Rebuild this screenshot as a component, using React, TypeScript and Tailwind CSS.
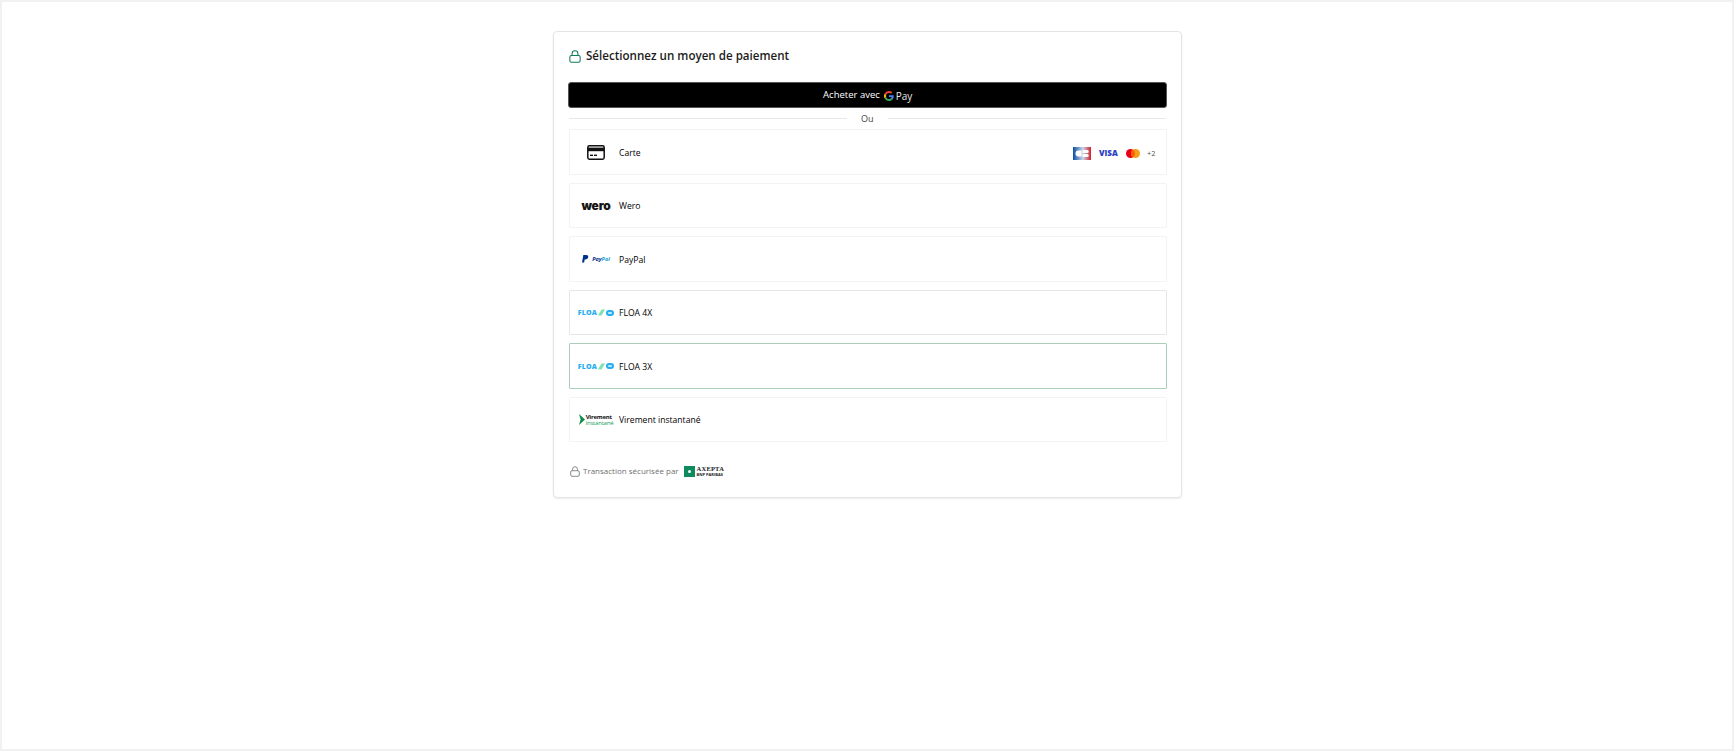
const font = "font-['Open_Sans','Noto_Sans',sans-serif]";

function LockIcon({ className }: { className: string }) {
  return (
    <svg viewBox="0 0 14 15" fill="none" stroke="currentColor" strokeWidth="1.2" className={className}>
      <rect x="1" y="6.4" width="12" height="7.8" rx="1.8" />
      <path d="M3.6 6.4V4.2a3.4 3.4 0 0 1 6.8 0v2.2" />
    </svg>
  );
}

function GoogleG() {
  return (
    <svg viewBox="0 0 48 48" className="h-[10px] w-[10px]">
      <path fill="#EA4335" d="M24 9.5c3.5 0 6.6 1.2 9.1 3.6l6.8-6.8C35.8 2.5 30.4 0 24 0 14.6 0 6.5 5.4 2.6 13.2l7.9 6.2C12.4 13.7 17.7 9.5 24 9.5z" />
      <path fill="#4285F4" d="M46.9 24.5c0-1.6-.1-3.1-.4-4.5H24v9h12.9c-.6 3-2.2 5.5-4.7 7.2l7.7 6c4.5-4.2 7-10.3 7-17.7z" />
      <path fill="#FBBC05" d="M10.5 28.6a14.5 14.5 0 0 1 0-9.2l-7.9-6.2a24 24 0 0 0 0 21.6l7.9-6.2z" />
      <path fill="#34A853" d="M24 48c6.5 0 11.9-2.1 15.9-5.8l-7.7-6c-2.2 1.5-4.9 2.3-8.2 2.3-6.3 0-11.6-4.2-13.5-9.9l-7.9 6.2C6.5 42.6 14.6 48 24 48z" />
    </svg>
  );
}

function CardIcon() {
  return (
    <svg viewBox="0 0 18 15" className="h-[15px] w-[18px]">
      <rect x="0.8" y="0.8" width="16.4" height="13.4" rx="1.6" fill="#fff" stroke="#111" strokeWidth="1.5" />
      <rect x="1" y="2.6" width="16" height="3.6" fill="#111" />
      <rect x="3" y="9.6" width="3" height="1.4" fill="#111" />
      <rect x="7" y="9.6" width="3" height="1.4" fill="#111" />
    </svg>
  );
}

function CbLogo() {
  return (
    <svg viewBox="0 0 18 13" className="h-[13px] w-[18px]">
      <defs>
        <linearGradient id="cb-bg" x1="0" x2="1" y1="0" y2="0">
          <stop offset="0" stopColor="#0b4ea2" />
          <stop offset="0.55" stopColor="#c9d6ea" />
          <stop offset="1" stopColor="#d3202b" />
        </linearGradient>
      </defs>
      <rect width="18" height="13" fill="url(#cb-bg)" />
      <path d="M8.6 3.6H5.4a2.9 2.9 0 0 0 0 5.8h3.2z" fill="#fff" />
      <path d="M9.6 3h4.6a1.5 1.5 0 0 1 0 3.1H9.6zM9.6 6.9h4.6a1.5 1.5 0 0 1 0 3.1H9.6z" fill="#fff" />
    </svg>
  );
}

function MastercardLogo() {
  return (
    <svg viewBox="0 0 14 9" className="h-[9px] w-[14px]">
      <circle cx="4.5" cy="4.5" r="4.5" fill="#eb001b" />
      <circle cx="9.5" cy="4.5" r="4.5" fill="#f79e1b" />
      <path d="M7 .8a4.5 4.5 0 0 1 0 7.4A4.5 4.5 0 0 1 7 .8z" fill="#ff5f00" />
    </svg>
  );
}

function FloaLogo() {
  return (
    <span className="flex items-center">
      <span className="text-[7px] leading-none font-extrabold tracking-[0.2px] text-[#27aef0]">FLOA</span>
      <svg viewBox="0 0 7 7" className="ml-[1px] h-[7px] w-[7px]">
        <path d="M0 6.5 3.5 .5h3.5L3.5 6.5z" fill="#7fe0b0" />
      </svg>
      <span className="ml-[1px] flex h-[6px] w-[8px] items-center justify-center rounded-full bg-[#27aef0]">
        <span className="h-[2px] w-[4px] rounded-full bg-[#bfe8fa]" />
      </span>
    </span>
  );
}

function PayPalLogo() {
  return (
    <span className="flex items-center gap-[3px]">
      <svg viewBox="0 0 8 9" className="h-[8px] w-[7px]">
        <path d="M1.5 0h3.2c1.8 0 2.8 1 2.4 2.6C6.7 4.2 5.5 5 4 5H3L2.5 8.5H0z" fill="#003087" />
      </svg>
      <span className="text-[5.5px] leading-none font-bold italic">
        <span className="text-[#003087]">Pay</span>
        <span className="text-[#1b9ad6]">Pal</span>
      </span>
    </span>
  );
}

function VirementLogo() {
  return (
    <span className="flex items-center gap-[1px]">
      <svg viewBox="0 0 6 11" className="h-[11px] w-[6px]">
        <path d="M0 0 6 5.5 0 11 1.6 5.5z" fill="#0f8a4a" />
      </svg>
      <span className="flex flex-col items-start">
        <span className="text-[6px] leading-[6px] font-bold tracking-[-0.2px] text-[#111]">Virement</span>
        <span className="text-[6px] leading-[6px] tracking-[-0.2px] text-[#16a05a]">instantané</span>
      </span>
    </span>
  );
}

const rows = [
  { label: "Wero", logo: <span className="font-['Inter',sans-serif] text-[12px] leading-none font-black tracking-[-0.2px] text-[#151515]">wero</span> },
  { label: "PayPal", logo: <PayPalLogo /> },
  { label: "FLOA 4X", logo: <FloaLogo />, border: "border-[#e6e6e6]" },
  { label: "FLOA 3X", logo: <FloaLogo />, border: "border-[#a9cdb8]" },
  { label: "Virement instantané", logo: <VirementLogo /> },
];

function Row({ logo, label, border, children }: { logo: React.ReactNode; label: string; border?: string; children?: React.ReactNode }) {
  return (
    <div className={`flex h-[45.5px] items-center rounded-[1px] border pt-[1px] pr-[10px] ${border ?? "border-[#f3f3f3]"}`}>
      <div className="flex w-[49px] shrink-0 items-center justify-center pl-[3px]">{logo}</div>
      <span className="pt-[2px] text-[8.6px] font-medium text-black">{label}</span>
      {children}
    </div>
  );
}

export default function App() {
  return (
    <div className={`flex h-[751px] justify-center border-2 border-[#f1f1f1] bg-white pt-[29px] ${font}`}>
      <div className="h-[467px] w-[629px] rounded-[4px] border border-[#e4e4e4] pr-[14px] pl-[14.5px] shadow-[0_1px_2px_rgba(0,0,0,0.08)]">
        <div className="flex h-[50px] items-center gap-[5px]">
          <LockIcon className="mb-[2px] ml-[1px] h-[13px] w-[12px] text-[#0f7a55]" />
          <h1 className="mb-[2px] text-[11.6px] font-semibold text-[#1c1c1c]">Sélectionnez un moyen de paiement</h1>
        </div>
        <button className="flex h-[26px] w-full items-center justify-center gap-[3px] rounded-[3px] border border-[#555] bg-black pt-[1px] pl-[1px] text-[9.5px] text-white">
          Acheter avec
          <span className="ml-[1px] flex items-center gap-[2px]">
            <GoogleG />
            <span className="text-[10px] leading-none text-[#e8e8e8]">Pay</span>
          </span>
        </button>
        <div className="mt-[3px] flex h-[15px] items-center px-[1px]">
          <div className="h-px flex-1 bg-[#e8e8e8]" />
          <span className="w-[41px] pt-[1px] text-center text-[9px] text-[#444]">Ou</span>
          <div className="h-px flex-1 bg-[#e8e8e8]" />
        </div>
        <div className="mt-[3px] flex flex-col gap-[8px] pl-[1px]">
          <Row logo={<CardIcon />} label="Carte">
            <div className="ml-auto flex items-center gap-[8px] pt-[2px]">
              <CbLogo />
              <span className="w-[17px] text-[8px] leading-none font-extrabold text-[#2b3fc4]">VISA</span>
              <span className="ml-[2px]"><MastercardLogo /></span>
              <span className="ml-[-1px] text-[7.5px] text-[#555]">+2</span>
            </div>
          </Row>
          {rows.map((row) => (
            <Row key={row.label} logo={row.logo} label={row.label} border={row.border} />
          ))}
        </div>
        <div className="mt-[23px] flex items-center pl-[2px] text-[#6f6f6f]">
          <LockIcon className="h-[11px] w-[10px] text-[#777]" />
          <span className="ml-[3px] text-[8px]">Transaction sécurisée par</span>
          <span className="ml-[5px] flex items-center gap-[2px]">
            <span className="flex h-[11px] w-[11px] items-center justify-center bg-[#0f8a5f]">
              <span className="h-[3px] w-[3px] rounded-full bg-white" />
            </span>
            <span className="flex flex-col items-start text-[#222]">
              <span className="font-['Liberation_Serif',serif] text-[6.5px] leading-[6px] font-bold tracking-[0.2px]">AXEPTA</span>
              <span className="text-[4px] leading-[5px] font-bold">BNP PARIBAS</span>
            </span>
          </span>
        </div>
      </div>
    </div>
  );
}
